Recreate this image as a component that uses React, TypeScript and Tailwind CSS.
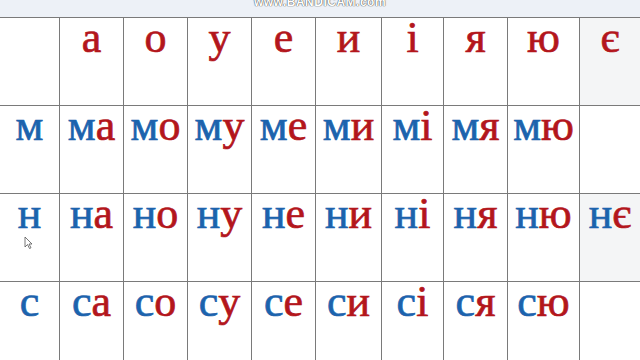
import React from "react";

type Cell = { t: string; gray?: boolean } | null;

const cols = ["а", "о", "у", "е", "и", "і", "я", "ю", "є"];

const rows: { c: string; skip: string[] }[] = [
  { c: "м", skip: ["є"] },
  { c: "н", skip: [] },
  { c: "с", skip: ["є"] },
];

const widths = ["w-[60px]", "w-[64px]", "w-[64px]", "w-[64px]", "w-[64px]", "w-[66px]", "w-[62px]", "w-[64px]", "w-[72px]", "flex-1"];

function Syl({ text }: { text: string }) {
  if (text.length === 1) return <span className="text-[#b3161c]">{text}</span>;
  return (
    <>
      <span className="text-[#1c63ad]">{text[0]}</span>
      <span className="text-[#b3161c]">{text.slice(1)}</span>
    </>
  );
}

function Row({ cells, first }: { cells: Cell[]; first?: boolean }) {
  return (
    <div className="flex h-[88px]">
      {cells.map((cell, i) => (
        <div
          key={i}
          className={`${widths[i]} h-full border-b border-[#7a7a7a] ${i < 9 ? "border-r" : ""} ${
            cell?.gray ? "bg-[#f4f5f6]" : "bg-white"
          } flex justify-center text-[44px] leading-[40px] [-webkit-text-stroke:0.7px_currentColor]`}
        >
          {cell && (i === 0 && !first ? <span className="text-[#1c63ad]">{cell.t}</span> : <Syl text={cell.t} />)}
        </div>
      ))}
    </div>
  );
}

export default function App() {
  const header: Cell[] = [null, ...cols.map((v) => ({ t: v, gray: v === "є" }))];
  return (
    <div className="relative w-[640px] h-[360px] overflow-hidden bg-white" style={{ fontFamily: '"Liberation Serif", "DejaVu Serif", serif' }}>
      <div className="h-[17px] bg-[#edf1f7] flex justify-center">
        <span
          className="mt-[-4px] text-[12px] leading-[12px] font-bold tracking-[0.5px] text-white [text-shadow:0_0_1px_#444,0_0_1px_#444]"
          style={{ fontFamily: '"Liberation Sans", sans-serif' }}
        >
          www.BANDICAM.com
        </span>
      </div>
      <div className="border-t border-[#7a7a7a]">
        <Row cells={header} first />
        {rows.map((r) => (
          <Row
            key={r.c}
            cells={[
              { t: r.c },
              ...cols.map((v) => (r.skip.includes(v) ? null : { t: r.c + v, gray: v === "є" })),
            ]}
          />
        ))}
      </div>
      <svg className="absolute left-[24px] top-[236px]" width="9" height="14" viewBox="0 0 9 14">
        <path d="M1 1 L1 11 L3.5 8.5 L5.5 12.5 L7 11.8 L5 8 L8 8 Z" fill="white" stroke="#555" strokeWidth="0.8" />
      </svg>
    </div>
  );
}
